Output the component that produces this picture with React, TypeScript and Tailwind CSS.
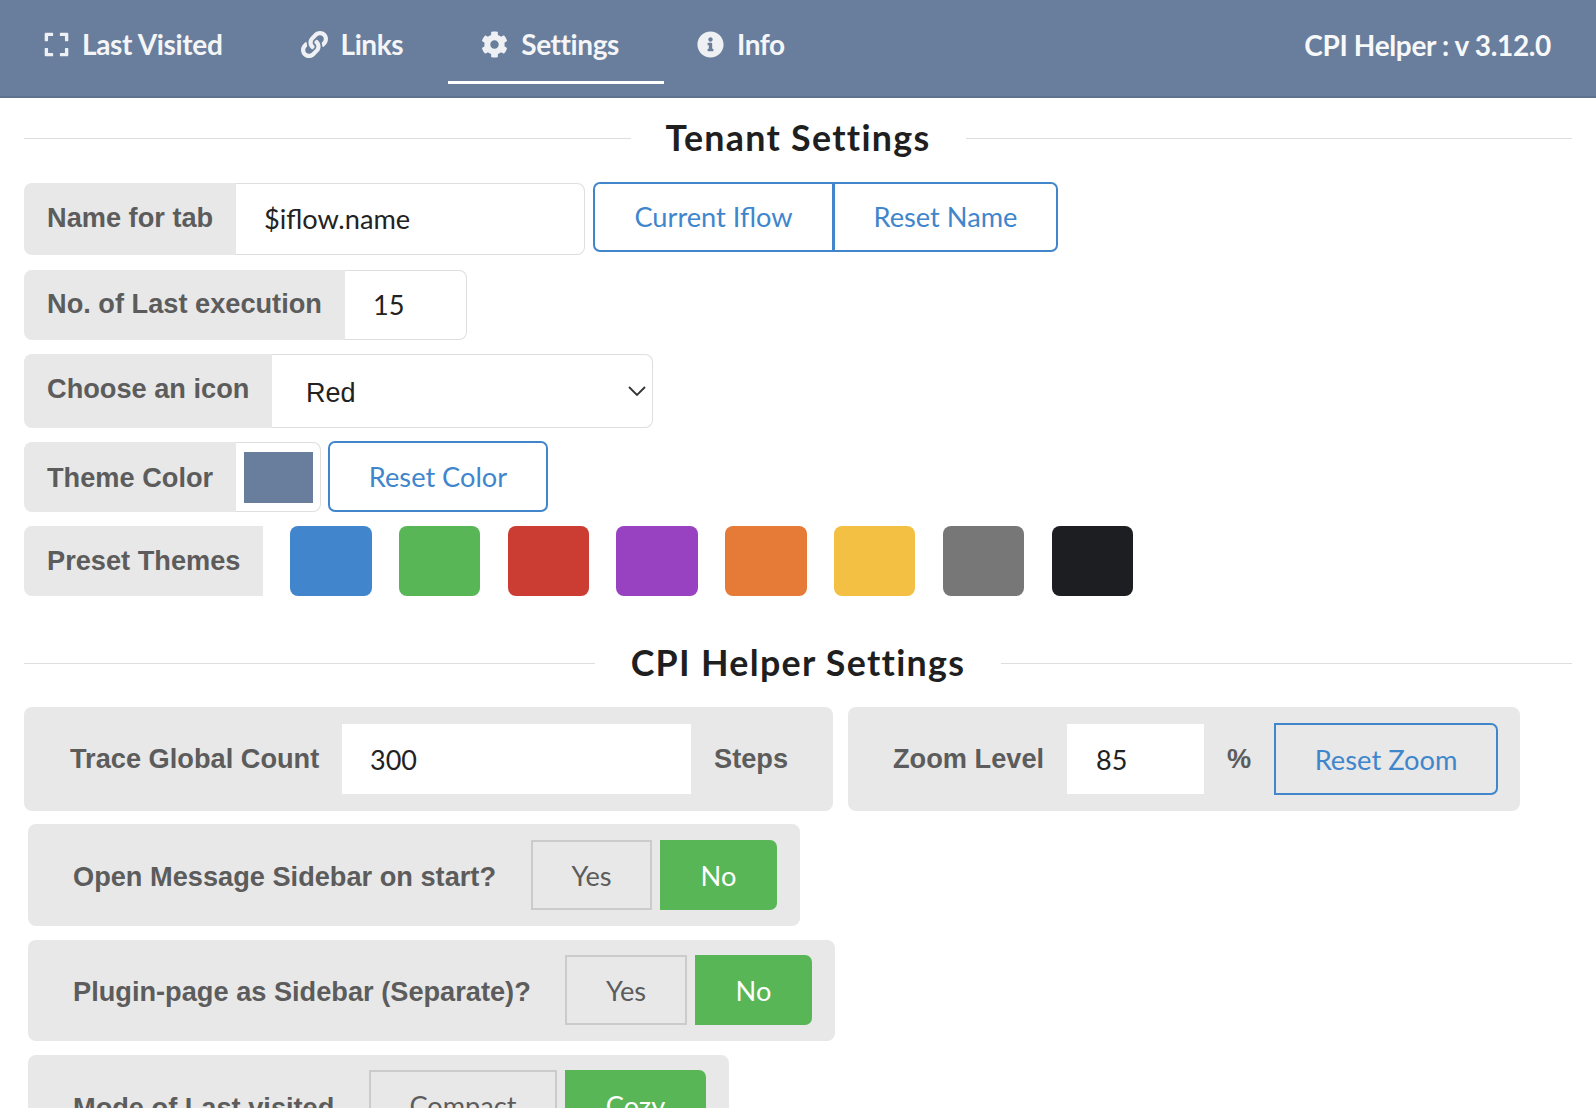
import React from "react";
import { FaExpand, FaLink, FaCog, FaInfoCircle } from "react-icons/fa";

const lato = "font-['Lato','Liberation_Sans',sans-serif]";

function NavItem({ icon, label, gap = "gap-[13px]", track = "tracking-[-0.4px]", active }: { icon: React.ReactNode; label: string; gap?: string; track?: string; active?: boolean }) {
  return (
    <div className={`pl-[33px] pr-[45px] pt-[7px] h-[84px] flex items-center ${gap} text-[28px] font-bold ${track} text-[#f4f5f7] border-b-[3px] ${active ? "border-white" : "border-transparent"}`}>
      {icon}
      <span>{label}</span>
    </div>
  );
}

function Heading({ children, gap }: { children: string; gap: string }) {
  return (
    <div className="flex items-center h-[40px]">
      <div className="flex-1 h-px bg-[#dedede]" />
      <div className={`${gap} text-center text-[35.8px] font-bold tracking-[1.3px] text-[#1f1f1f] leading-none`}>{children}</div>
      <div className="flex-1 h-px bg-[#dedede]" />
    </div>
  );
}

function Label({ children, w, cls = "pb-[1px]" }: { children: string; w: string; cls?: string }) {
  return (
    <div className={`${w} shrink-0 h-full bg-[#e8e8e8] pl-[23px] flex items-center font-['Liberation_Sans',sans-serif] font-bold text-[27.2px] text-[#5c5c5c] rounded-l-[8px] ${cls}`}>
      {children}
    </div>
  );
}

function Outline({ children, w, cls = "" }: { children: string; w: string; cls?: string }) {
  return (
    <button className={`${w} h-full border-2 border-[#4186cb] text-[#3f86cc] text-[27.2px] flex items-center justify-center ${cls}`}>
      {children}
    </button>
  );
}

function Toggle({ label, w, rowH, rowMt, yes, no, yesW, noW, btnLeft, up = "-mt-[1px]" }: { label: string; w: string; rowH: string; rowMt: string; yes: string; no: string; yesW: string; noW: string; btnLeft: string; up?: string }) {
  return (
    <div className={`${w} ${rowH} ${rowMt} ml-[4px] bg-[#e8e8e8] rounded-[8px] flex items-center pl-[45px]`}>
      <div className={`${btnLeft} shrink-0 pt-[4px] font-['Liberation_Sans',sans-serif] font-bold text-[27.2px] text-[#5c5c5c]`}>{label}</div>
      <div className={`${yesW} ${up} h-[70px] pt-[3px] border-2 border-[#cbcbcb] text-[#5c5c5c] text-[27.2px] flex items-center justify-center`}>{yes}</div>
      <div className={`${noW} ${up} h-[70px] pt-[3px] ml-[8px] bg-[#58b657] text-white text-[27.2px] flex items-center justify-center rounded-r-[7px]`}>{no}</div>
    </div>
  );
}

const swatches = ["bg-[#4185cc]", "bg-[#58b657]", "bg-[#cb3c33]", "bg-[#9842c2]", "bg-[#e67a37]", "bg-[#f4c043]", "bg-[#777777]", "bg-[#1c1e21]"];

export default function App() {
  return (
    <div className={`${lato} w-[1596px] h-[1108px] overflow-hidden bg-white`}>
      <header className="h-[98px] bg-[#697e9c] border-b-2 border-[#5f7290] flex items-start justify-between pr-[45px]">
        <div className="flex items-start pl-[10px]">
          <NavItem gap="gap-[12px]" track="tracking-[-0.32px]" label="Last Visited" icon={<FaExpand className="text-[27px] text-[#eef0f3]" />} />
          <NavItem label="Links" icon={<FaLink className="text-[27px] text-[#eef0f3]" />} />
          <NavItem active label="Settings" icon={<FaCog className="text-[27px] text-[#eef0f3]" />} />
          <NavItem label="Info" icon={<FaInfoCircle className="text-[27px] text-[#eef0f3]" />} />
        </div>
        <div className="h-[90px] flex items-center text-[28px] font-bold tracking-[-0.35px] text-[#f7f8f9]">CPI Helper : v 3.12.0</div>
      </header>

      <main className="px-[24px]">
        <div className="mt-[20px]">
          <Heading gap="w-[335px]">Tenant Settings</Heading>
        </div>

        <div className="mt-[25px] flex items-start h-[72px]">
          <div className="flex h-[72px] w-[561px]">
            <Label w="w-[212px]">Name for tab</Label>
            <input readOnly defaultValue="$iflow.name" className="flex-1 min-w-0 border border-l-0 border-[#dedede] rounded-r-[8px] pl-[28px] text-[27.2px] text-[#222222] outline-none" />
          </div>
          <div className="ml-[8px] -mt-[1px] flex h-[70px]">
            <Outline w="w-[241px]" cls="rounded-l-[7px]">Current Iflow</Outline>
            <Outline w="w-[225px] -ml-[1px]" cls="rounded-r-[7px]">Reset Name</Outline>
          </div>
        </div>

        <div className="mt-[15px] flex h-[70px] w-[443px]">
          <Label w="w-[321px]">No. of Last execution</Label>
          <input readOnly defaultValue="15" className="flex-1 min-w-0 border border-l-0 border-[#dedede] rounded-r-[8px] pl-[28px] text-[27.2px] text-[#222222] outline-none" />
        </div>

        <div className="mt-[14px] flex h-[74px] w-[629px]">
          <Label w="w-[248px]" cls="pb-[3px]">Choose an icon</Label>
          <div className="relative flex-1 border border-l-0 border-[#dedede] rounded-r-[8px] pl-[34px] pt-[4px] flex items-center font-['Liberation_Sans',sans-serif] text-[27px] text-[#222222]">
            Red
            <svg className="absolute right-[5px] top-[29px]" width="20" height="14" viewBox="0 0 20 14" fill="none" stroke="#333333" strokeWidth="1.8"><path d="M2 3l8 8 8-8" /></svg>
          </div>
        </div>

        <div className="mt-[14px] flex items-start h-[70px]">
          <div className="flex h-[70px] w-[297px]">
            <Label w="w-[212px]" cls="pt-[3px]">Theme Color</Label>
            <div className="flex-1 border border-l-0 border-[#dedede] rounded-r-[8px] flex items-center justify-center">
              <div className="w-[69px] h-[51px] mt-[1px] bg-[#697e9c]" />
            </div>
          </div>
          <div className="-mt-[1px] ml-[7px] h-[71px]">
            <Outline w="w-[220px]" cls="rounded-[7px] pt-[1px]">Reset Color</Outline>
          </div>
        </div>

        <div className="mt-[14px] flex h-[70px]">
          <div className="w-[239px] h-full bg-[#e8e8e8] pl-[23px] flex items-center font-['Liberation_Sans',sans-serif] font-bold text-[27.2px] text-[#5c5c5c] rounded-l-[8px]">Preset Themes</div>
          <div className="ml-[27px] flex gap-[27.3px]">
            {swatches.map((s) => (
              <div key={s} className={`${s} w-[81.5px] h-[70px] rounded-[8px]`} />
            ))}
          </div>
        </div>

        <div className="mt-[47px]">
          <Heading gap="w-[406px]">CPI Helper Settings</Heading>
        </div>

        <div className="mt-[24px] flex gap-[15px] h-[104px]">
          <div className="w-[809px] bg-[#e8e8e8] rounded-[8px] flex items-center pl-[46px] font-['Liberation_Sans',sans-serif] font-bold text-[27.2px] text-[#5c5c5c]">
            <div className="w-[272px] shrink-0">Trace Global Count</div>
            <input readOnly defaultValue="300" className={`${lato} w-[349px] h-[70px] bg-white pl-[28px] text-[27px] font-normal text-[#222222] outline-none`} />
            <div className="ml-[23px]">Steps</div>
          </div>
          <div className="w-[672px] bg-[#e8e8e8] rounded-[8px] flex items-center pl-[45px] font-['Liberation_Sans',sans-serif] font-bold text-[27.2px] text-[#5c5c5c]">
            <div className="w-[174px] shrink-0">Zoom Level</div>
            <input readOnly defaultValue="85" className={`${lato} w-[137px] h-[70px] bg-white pl-[29px] text-[27px] font-normal text-[#222222] outline-none`} />
            <div className="ml-[23px] w-[47px] shrink-0">%</div>
            <button className={`${lato} w-[224px] h-[72px] border-2 border-[#4186cb] rounded-r-[7px] pt-[2px] text-[#3f86cc] text-[27.3px] font-normal`}>Reset Zoom</button>
          </div>
        </div>

        <Toggle label="Open Message Sidebar on start?" w="w-[772px]" rowH="h-[102px]" rowMt="mt-[13px]" yes="Yes" no="No" yesW="w-[121px]" noW="w-[117px]" btnLeft="w-[458px]" />
        <Toggle label="Plugin-page as Sidebar (Separate)?" w="w-[807px]" rowH="h-[101px]" rowMt="mt-[14px]" yes="Yes" no="No" yesW="w-[122px]" noW="w-[117px]" btnLeft="w-[492px]" />
        <Toggle label="Mode of Last visited" w="w-[701px]" rowH="h-[102px]" rowMt="mt-[14px]" yes="Compact" no="Cozy" yesW="w-[188px]" noW="w-[141px]" btnLeft="w-[296px]" up="-mt-[3px]" />
      </main>
    </div>
  );
}
